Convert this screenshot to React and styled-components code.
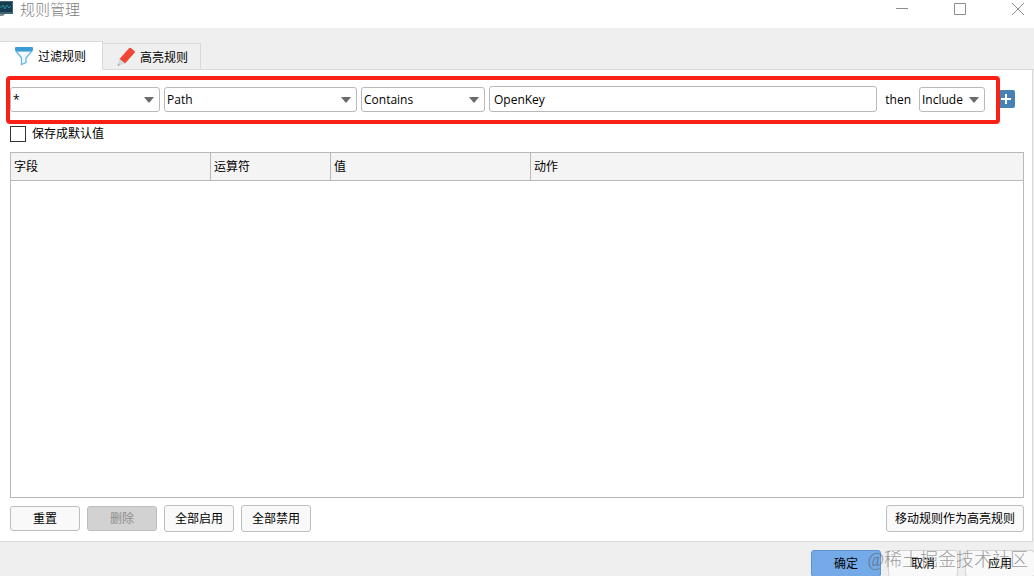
import React, { useState } from 'react'
import styled, { createGlobalStyle } from 'styled-components'

const GlobalStyle = createGlobalStyle`
  * {
    box-sizing: border-box;
  }

  body {
    margin: 0;
    background: #ffffff;
  }

  body, button, input, select {
    font-family: "Open Sans", "Noto Sans", "Noto Sans CJK SC", sans-serif;
    font-size: 12px;
    color: #000000;
  }
`

const Dialog = styled.div`
  height: 100vh;
  display: flex;
  flex-direction: column;
  overflow: hidden;
  background: #efefef;
`

const TitleBar = styled.header`
  flex: none;
  height: 28px;
  display: flex;
  align-items: flex-start;
  justify-content: space-between;
  background: #ffffff;
`

const Title = styled.h1`
  display: flex;
  align-items: center;
  gap: 6px;
  margin: 0;
  height: 19px;
  font-size: 15px;
  font-weight: 300;
  line-height: 19px;
  color: #808080;
`

const WindowButtons = styled.div`
  display: flex;
  gap: 26px;
`

const WindowButton = styled.button`
  width: 32px;
  height: 18px;
  padding: 0;
  border: none;
  background: transparent;
  display: flex;
  align-items: center;
  justify-content: center;
`

const TabList = styled.div`
  flex: none;
  height: 42px;
  display: flex;
  align-items: flex-end;
  border-bottom: 1px solid #d9d9d9;
`

const Tab = styled.button`
  height: ${p => p.$active ? "29px" : "26px"};
  margin-bottom: ${p => p.$active ? "-1px" : "0"};
  padding: ${p => p.$active ? "0 16px 0 14px" : "0 12px 0 14px"};
  display: flex;
  align-items: center;
  gap: 4px;
  border: 1px solid #d9d9d9;
  border-left: none;
  border-bottom: none;
  background: ${p => p.$active ? "#ffffff" : "#efefef"};
  white-space: nowrap;
`

const Panel = styled.main`
  flex: 1;
  min-height: 0;
  margin-right: 1px;
  padding: 16px 8px 9px 10px;
  display: flex;
  flex-direction: column;
  background: #ffffff;
  border-right: 1px solid #d9d9d9;
  border-bottom: 1px solid #d9d9d9;
`

const RuleForm = styled.form`
  position: relative;
  display: flex;
  align-items: flex-end;
  gap: 4px;
  padding-right: 9px;
`

const Highlight = styled.div`
  position: absolute;
  top: -10px;
  bottom: -12px;
  left: -4px;
  right: 24px;
  border: 4px solid #fb2016;
  border-radius: 4px;
  pointer-events: none;
`

const SelectBox = styled.div`
  flex: none;
  width: ${p => p.$width};
  display: grid;
  align-items: center;

  select, svg {
    grid-area: 1 / 1;
  }

  select {
    appearance: none;
    width: 100%;
    height: 25px;
    padding: 0 20px 0 2px;
    border: 1px solid #b9b9b9;
    border-radius: 3px;
    background: #ffffff;
  }

  svg {
    justify-self: end;
    margin-right: 6px;
    pointer-events: none;
  }
`

const ValueInput = styled.input`
  flex: 1;
  min-width: 0;
  height: 26px;
  padding: 0 4px;
  border: 1px solid #b9b9b9;
  border-radius: 3px;
  background: #ffffff;
`

const Then = styled.span`
  padding: 0 4px;
  line-height: 25px;
`

const AddButton = styled.button`
  width: 18px;
  height: 18px;
  margin: 0 0 4px 8px;
  padding: 0;
  display: flex;
  align-items: center;
  justify-content: center;
  border: none;
  border-radius: 2px;
  background: #4682b4;
`

const SaveDefault = styled.label`
  align-self: flex-start;
  display: flex;
  align-items: center;
  gap: 6px;
  height: 16px;
  margin: 14px 0 10px;
  line-height: 18px;

  input {
    appearance: none;
    width: 16px;
    height: 16px;
    margin: 0;
    border: 1px solid #333333;
    background: #ffffff;
  }

  input:checked {
    background: #333333;
    box-shadow: inset 0 0 0 3px #ffffff;
  }
`

const TableFrame = styled.div`
  flex: 1;
  min-height: 0;
  overflow: auto;
  border: 1px solid #b9b9b9;
`

const RuleTable = styled.table`
  width: 100%;
  table-layout: fixed;
  border-collapse: separate;
  border-spacing: 0;

  th {
    height: 28px;
    padding: 0 3px 2px;
    background: #f4f4f4;
    border-bottom: 1px solid #b9b9b9;
    border-right: 1px solid #b9b9b9;
    font-weight: 400;
    text-align: left;
  }

  th:last-child {
    border-right: none;
  }
`

const Actions = styled.div`
  flex: none;
  display: flex;
  align-items: center;
  gap: 7px;
  margin-top: 7px;
`

const Button = styled.button`
  min-width: 70px;
  height: ${p => p.$small ? "25px" : "27px"};
  margin-left: ${p => p.$right ? "auto" : "0"};
  padding: 0 8px 1px;
  border: 1px solid #bdbdbd;
  border-radius: 3px;
  background: #f9f9f9;

  &:disabled {
    background: #d2d2d2;
    color: #8c8c8c;
  }
`

const FooterButton = styled(Button)`
  border-color: ${p => p.$primary ? "#5a93d0" : "#d4d4d4"};
  background: ${p => p.$primary ? "#74aae8" : "#f9f9f9"};
`

const Footer = styled.footer`
  position: relative;
  flex: none;
  height: 34px;
  margin-right: -1px;
  padding-top: 8px;
  display: flex;
  align-items: flex-start;
  justify-content: flex-end;
  gap: 7px;
`

const Watermark = styled.span`
  position: absolute;
  right: 7px;
  top: 5px;
  font-family: "Liberation Serif", "Noto Sans CJK SC", serif;
  font-size: 18px;
  font-weight: 300;
  line-height: 26px;
  color: rgba(90, 90, 90, 0.6);
  pointer-events: none;
`

const columns = [
  { title: "字段", width: 200 },
  { title: "运算符", width: 120 },
  { title: "值", width: 200 },
  { title: "动作" },
]

function AppIcon() {
  return (
    <svg width="14" height="19" viewBox="0 0 14 19" aria-hidden="true">
      <path d="M0 1h13v13H0z" fill="#3d6573" />
      <path d="M0 2h12v10H0z" fill="#153f50" />
      <path d="M0 7h2l1-2 2 4 2-4 2 3 2-2" fill="none" stroke="#2f8797" />
      <path d="M0 14h5l-2 2H0z" fill="#7f8c92" />
    </svg>
  )
}

function FunnelIcon() {
  return (
    <svg width="20" height="20" viewBox="0 0 20 20" aria-hidden="true">
      <path d="M2 5l5.500 7v6.500l4.500-2V12l6-7z" fill="#f3f9fd" stroke="#6bb5e0" strokeWidth="1.300" />
      <path d="M2 1h16q1 0 1 1v1.500l-1 1.500H2L1 3.500V2q0-1 1-1z" fill="#3c9bd2" />
    </svg>
  )
}

function PencilIcon() {
  return (
    <svg width="19" height="20" viewBox="0 0 19 20" aria-hidden="true">
      <path d="M12 1.200q0.900-0.900 1.800-0.200l3.700 3q0.900 0.800 0.100 1.700L8 16.500 2.500 12z" fill="#f04636" />
      <path d="M2.500 12L8 16.500 0.500 19z" fill="#d3dadd" />
      <path d="M1.300 16.500l1.700 1.600-2.500 0.900z" fill="#9aa3a8" />
    </svg>
  )
}

function Select({ label, options, width }) {
  const [value, setValue] = useState(options[0])

  return (
    <SelectBox $width={width}>
      <select aria-label={label} value={value} onChange={e => setValue(e.target.value)}>
        {options.map((o) => <option key={o}>{o}</option>)}
      </select>
      <svg width="10" height="6" viewBox="0 0 10 6" aria-hidden="true">
        <path d="M0 0h10L5.500 5.500h-1z" fill="#6b6b6b" />
      </svg>
    </SelectBox>
  )
}

function App() {
  const [tab, setTab] = useState("filter")
  const [value, setValue] = useState("OpenKey")
  const [isDefault, setIsDefault] = useState(false)

  return (
    <>
      <GlobalStyle />
      <Dialog>
        <TitleBar>
          <Title><AppIcon />规则管理</Title>
          <WindowButtons>
            <WindowButton aria-label="最小化">
              <svg width="12" height="12"><path d="M0 5.500h12" stroke="#8c8c8c" /></svg>
            </WindowButton>
            <WindowButton aria-label="最大化">
              <svg width="12" height="12"><path d="M0.500 0.500h11v11h-11z" fill="none" stroke="#8c8c8c" /></svg>
            </WindowButton>
            <WindowButton aria-label="关闭">
              <svg width="12" height="12"><path d="M0 0l12 12M12 0L0 12" stroke="#8c8c8c" /></svg>
            </WindowButton>
          </WindowButtons>
        </TitleBar>

        <TabList role="tablist">
          <Tab role="tab" aria-selected={tab === "filter"} $active={tab === "filter"} onClick={() => setTab("filter")}>
            <FunnelIcon />过滤规则
          </Tab>
          <Tab role="tab" aria-selected={tab === "highlight"} $active={tab === "highlight"} onClick={() => setTab("highlight")}>
            <PencilIcon />高亮规则
          </Tab>
        </TabList>

        <Panel>
          <RuleForm onSubmit={e => e.preventDefault()}>
            <Select label="字段" width="150px" options={["*"]} />
            <Select label="属性" width="193px" options={["Path"]} />
            <Select label="运算符" width="124px" options={["Contains"]} />
            <ValueInput aria-label="值" value={value} onChange={e => setValue(e.target.value)} />
            <Then>then</Then>
            <Select label="动作" width="66px" options={["Include", "Exclude"]} />
            <AddButton aria-label="添加">
              <svg width="12" height="12"><path d="M6 1v10M1 6h10" stroke="#ffffff" strokeWidth="2" /></svg>
            </AddButton>
            <Highlight />
          </RuleForm>

          <SaveDefault>
            <input type="checkbox" checked={isDefault} onChange={e => setIsDefault(e.target.checked)} />
            保存成默认值
          </SaveDefault>

          <TableFrame>
            <RuleTable>
              <colgroup>
                {columns.map((c) => <col key={c.title} width={c.width} />)}
              </colgroup>
              <thead>
                <tr>
                  {columns.map((c) => <th key={c.title} scope="col">{c.title}</th>)}
                </tr>
              </thead>
              <tbody />
            </RuleTable>
          </TableFrame>

          <Actions>
            <Button $small>重置</Button>
            <Button $small disabled>删除</Button>
            <Button>全部启用</Button>
            <Button>全部禁用</Button>
            <Button $right>移动规则作为高亮规则</Button>
          </Actions>
        </Panel>

        <Footer>
          <FooterButton $primary>确定</FooterButton>
          <FooterButton>取消</FooterButton>
          <FooterButton>应用</FooterButton>
          <Watermark>@稀土掘金技术社区</Watermark>
        </Footer>
      </Dialog>
    </>
  )
}

export default App
